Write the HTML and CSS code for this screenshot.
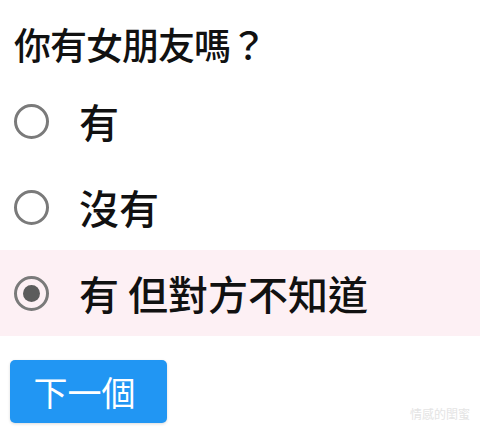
FILE: index.html
```html
<!DOCTYPE html>
<html lang="zh-Hant">
<head>
<meta charset="utf-8">
<link rel="stylesheet" href="styles.css">
</head>
<body>
<main class="quiz">
  <h1 class="question">你有女朋友嗎？</h1>
  <ul class="options">
    <li class="option"><span class="radio"></span><span class="label">有</span></li>
    <li class="option"><span class="radio"></span><span class="label">沒有</span></li>
    <li class="option selected"><span class="radio"></span><span class="label">有 但對方不知道</span></li>
  </ul>
  <button class="next">下一個</button>
  <span class="watermark">情感的閨蜜</span>
</main>
</body>
</html>
```
FILE: styles.css
```css
html, body {
  margin: 0;
  padding: 0;
  background: #ffffff;
}
.quiz {
  position: relative;
  width: 480px;
  height: 430px;
  font-family: "Noto Sans CJK TC", "Noto Sans CJK SC", sans-serif;
  color: #111111;
}
.question {
  margin: 0;
  box-sizing: border-box;
  height: 78px;
  padding: 24px 0 0 14px;
  font-size: 37px;
  line-height: 40px;
  font-weight: 500;
  letter-spacing: -1px;
}
.options {
  list-style: none;
  margin: 0;
  padding: 0;
}
.option {
  height: 86px;
  display: flex;
  align-items: center;
  padding-left: 14px;
  gap: 30px;
}
.option.selected {
  background: #fdf0f4;
}
.radio {
  box-sizing: border-box;
  width: 35px;
  height: 35px;
  border: 3px solid #7a7a7a;
  border-radius: 50%;
  display: flex;
  align-items: center;
  justify-content: center;
  flex-shrink: 0;
}
.option.selected .radio::after {
  content: "";
  width: 17px;
  height: 17px;
  border-radius: 50%;
  background: #5c5c5c;
}
.label {
  font-size: 40px;
  line-height: 44px;
  font-weight: 500;
}
.next {
  display: block;
  margin: 24px 0 0 10px;
  width: 157px;
  height: 63px;
  border: none;
  border-radius: 5px;
  background: #2196f3;
  color: #ffffff;
  font-family: "Noto Sans CJK TC", "Noto Sans CJK SC", sans-serif;
  font-size: 34px;
  font-weight: 400;
  padding: 0 8px 0 0;
  box-shadow: 0 1px 3px rgba(0, 0, 0, 0.15);
}
.watermark {
  position: absolute;
  right: 10px;
  bottom: 8px;
  font-size: 12px;
  color: #e4e4e4;
  font-family: "Noto Sans CJK TC", sans-serif;
}
```
